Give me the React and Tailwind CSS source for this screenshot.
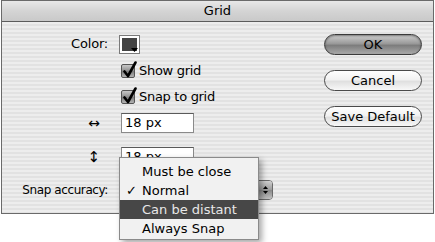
import React from "react";

const font = { fontFamily: '"DejaVu Sans", "Liberation Sans", sans-serif' };

function Check() {
  return (
    <div className="relative w-[14px] h-[14px] border border-[#555] rounded-[2px] bg-[linear-gradient(to_bottom,#c8c8c8,#8e8e8e_50%,#7a7a7a_51%,#b4b4b4)] shrink-0">
      <svg className="absolute left-[0px] top-[-4px]" width="16" height="18" viewBox="0 0 16 18">
        <path d="M2.5 10.5 L6 15 L13.5 1.5" fill="none" stroke="#000" strokeWidth="2.6" strokeLinecap="round" strokeLinejoin="round" />
      </svg>
    </div>
  );
}

function Button({ children, def }) {
  return (
    <div
      className={
        "w-[98px] h-[21px] rounded-full border flex items-center justify-center text-[13px] text-black " +
        (def
          ? "border-[#3a3a3a] bg-[linear-gradient(to_bottom,#cfcfcf,#9a9a9a_45%,#7d7d7d_55%,#a9a9a9)] shadow-[inset_0_1px_2px_rgba(0,0,0,0.4)]"
          : "border-[#4a4a4a] bg-[linear-gradient(to_bottom,#ffffff,#f2f2f2_45%,#e0e0e0_55%,#f8f8f8)]")
      }
    >
      {children}
    </div>
  );
}

function Field({ text }) {
  return (
    <div className="w-[73px] h-[20px] bg-white border border-[#8a8a8a] border-t-[#5a5a5a] flex items-center pl-[3px] text-[13px] text-black">
      {text}
    </div>
  );
}

export default function App() {
  return (
    <div className="w-[435px] h-[242px] bg-white relative overflow-hidden" style={font}>
      <div className="ml-[1px] w-[433px] h-[214px] border border-[#6a6a6a] flex flex-col">
        <div className="h-[21px] shrink-0 border-b border-[#5c5c5c] bg-[linear-gradient(to_bottom,#e8e8e8,#d4d4d4_50%,#c9c9c9)] flex items-center justify-center text-[13px] text-black">
          Grid
        </div>
        <div className="flex-1 flex bg-[repeating-linear-gradient(to_bottom,#ededed_0px,#ededed_2px,#e2e2e2_2px,#e2e2e2_4px)]">
          <div className="w-[322px] flex flex-col pt-[13px] text-[13px] text-black">
            <div className="flex items-center h-[18px]">
              <div className="w-[106px] text-right tracking-[-0.2px]">Color:</div>
              <div className="ml-[11px] w-[21px] h-[19px] border border-[#7a7a7a] bg-white relative">
                <div className="absolute left-[2px] top-[2px] w-[15px] h-[13px] bg-[#444]" />
                <svg className="absolute right-[1px] bottom-[1px]" width="7" height="4" viewBox="0 0 7 4">
                  <path d="M0 0 L7 0 L3.5 4 Z" fill="#000" />
                </svg>
              </div>
            </div>
            <div className="flex items-center h-[20px] mt-[8px] pl-[119px]">
              <Check />
              <span className="ml-[4px] tracking-[-0.3px]">Show grid</span>
            </div>
            <div className="flex items-center h-[20px] mt-[6px] pl-[119px]">
              <Check />
              <span className="ml-[4px] tracking-[-0.3px]">Snap to grid</span>
            </div>
            <div className="flex items-center h-[20px] mt-[6px]">
              <div className="w-[106px] pr-[8px] text-right text-[14px]">↔</div>
              <div className="ml-[13px]"><Field text="18 px" /></div>
            </div>
            <div className="flex items-center h-[20px] mt-[14px]">
              <div className="w-[106px] pr-[8px] text-right text-[15px]">↕</div>
              <div className="ml-[13px]"><Field text="18 px" /></div>
            </div>
            <div className="flex items-center h-[20px] mt-[13px]">
              <div className="w-[106px] text-right text-[12px] tracking-[-0.4px]">Snap accuracy:</div>
              <div className="ml-[11px] w-[154px] h-[20px] rounded-[4px] border border-[#6a6a6a] bg-[linear-gradient(to_bottom,#ffffff,#ececec)] flex justify-end">
                <div className="w-[13px] h-full rounded-r-[3px] bg-[linear-gradient(to_bottom,#d0d0d0,#9a9a9a_50%,#8a8a8a_51%,#c0c0c0)] flex flex-col items-center justify-center gap-[2px]">
                  <svg width="5" height="3" viewBox="0 0 5 3"><path d="M0 3 L5 3 L2.5 0 Z" fill="#000" /></svg>
                  <svg width="5" height="3" viewBox="0 0 5 3"><path d="M0 0 L5 0 L2.5 3 Z" fill="#000" /></svg>
                </div>
              </div>
            </div>
          </div>
          <div className="flex flex-col pt-[12px] gap-[15px]">
            <Button def>OK</Button>
            <Button>Cancel</Button>
            <Button>Save Default</Button>
          </div>
        </div>
      </div>

      <div className="absolute left-[119px] top-[157px] w-[140px] h-[83px] border border-[#8a8a8a] bg-[#f1f1f1] shadow-[3px_3px_6px_rgba(0,0,0,0.35)] pt-[4px] text-[13px] text-black">
        <div className="h-[19px] flex items-center pl-[22px]">Must be close</div>
        <div className="h-[19px] flex items-center relative pl-[22px]">
          <span className="absolute left-[6px] text-[13px]">✓</span>
          Normal
        </div>
        <div className="h-[19px] flex items-center pl-[22px] bg-[#474747] text-[#e8e8e8]">Can be distant</div>
        <div className="h-[19px] flex items-center pl-[22px]">Always Snap</div>
      </div>
    </div>
  );
}
